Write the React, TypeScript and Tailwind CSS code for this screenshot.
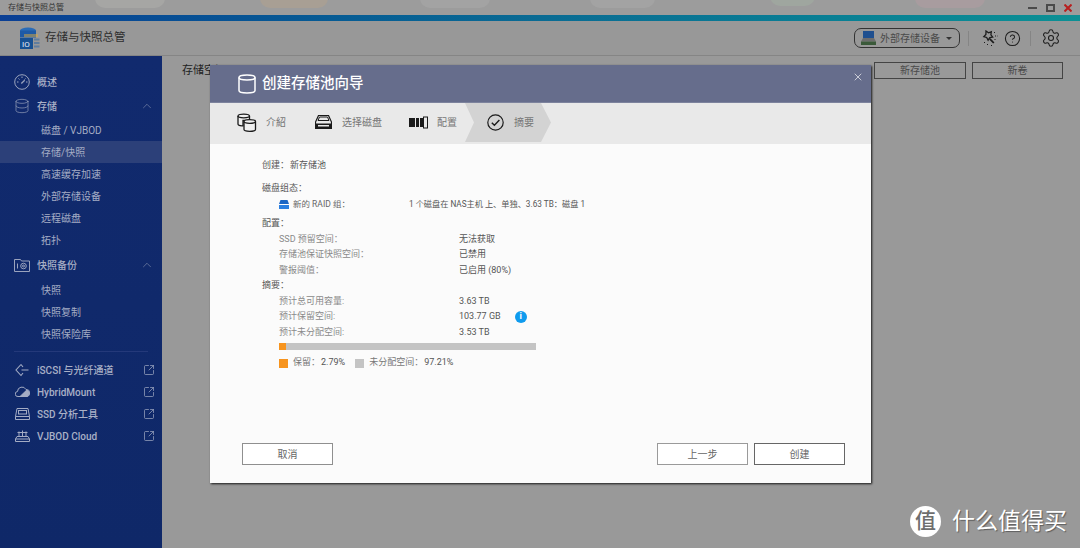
import { ChevronUp, CircleHelp, Database, Settings, SquareArrowOutUpRight, X } from 'lucide-react';

const font = "font-['Roboto','Noto_Sans_CJK_SC',sans-serif]";

const subStorage = ['磁盘 / VJBOD', '存储/快照', '高速缓存加速', '外部存储设备', '远程磁盘', '拓扑'];
const subBackup = ['快照', '快照复制', '快照保险库'];

function SubItem({ label, active }: { label: string; active?: boolean }) {
  return (
    <div className={`h-[22px] flex items-center pl-[41px] text-[10px] text-[#a4acc4] ${active ? 'bg-[#2c4079]' : ''}`}>{label}</div>
  );
}

function GaugeIcon() {
  return (
    <svg width="16" height="16" viewBox="0 0 16 16" fill="none" stroke="#9aa3bd" strokeWidth="1">
      <circle cx="8" cy="8" r="7.300" />
      <path d="M8 2.500v1.500M3 8h1.500M12 8h1.500M4.500 4.500l1 1M11.500 4.500l-1 1" />
      <path d="m7.300 9.500 3.400-3.200" strokeWidth="1.300" />
    </svg>
  );
}

function BackupIcon() {
  return (
    <svg width="16" height="14" viewBox="0 0 16 14" fill="none" stroke="#9aa3bd" strokeWidth="1">
      <path d="M.5 13.500V1.500h6l1 1.500h8v10.500z" />
      <circle cx="9.500" cy="8" r="2.800" />
      <circle cx="9.500" cy="8" r="1" />
      <path d="M3.500 5.500v5" />
    </svg>
  );
}

function IscsiIcon() {
  return (
    <svg width="14" height="14" viewBox="0 0 14 14" fill="none" stroke="#a4acc4" strokeWidth="1.100">
      <path d="M6 1.500 1 7l5 5.500 2-2.500M6 1.500 8 4M6.500 7h7" />
    </svg>
  );
}

function HybridIcon() {
  return (
    <svg width="15" height="12" viewBox="0 0 15 12" fill="none" stroke="#a4acc4" strokeWidth="1">
      <path d="M3 10.500a2.500 2.500 0 0 1-.5-5A4.500 4.500 0 0 1 11 3.500a3.500 3.500 0 0 1 .5 7z" />
      <path d="M5 10.500 12 3.800l2.500 3-2 3.700z" fill="#a4acc4" />
    </svg>
  );
}

function SsdIcon() {
  return (
    <svg width="15" height="12" viewBox="0 0 15 12" fill="none" stroke="#a4acc4" strokeWidth="1">
      <path d="M2 .5h11l1.500 8v3H.5v-3zM.5 8.500h14" />
      <rect x="3.500" y="2.500" width="8" height="3.500" />
    </svg>
  );
}

function CloudDiskIcon() {
  return (
    <svg width="15" height="12" viewBox="0 0 15 12" fill="none" stroke="#a4acc4" strokeWidth="1">
      <path d="M2 6.500.5 9v2.500h14V9L13 6.500zM.5 9h14" />
      <path d="M4 6.500V1.500M7.500 6.500V.5M11 6.500V1.500M2.500 2.500h10" />
    </svg>
  );
}

function LinkRow({ icon, label }: { icon: React.ReactNode; label: string }) {
  return (
    <div className="h-[22px] flex items-center pl-[15px] pr-[7px] text-[10px] font-medium text-[#a9b0c6]">
      <span className="w-[22px] flex items-center">{icon}</span>
      <span className="flex-1">{label}</span>
      <SquareArrowOutUpRight size={12} strokeWidth={1.400} className="text-[#a4acc4]" />
    </div>
  );
}

function Sidebar() {
  return (
    <aside className="w-[162px] shrink-0 bg-gradient-to-b from-[#112a6e] to-[#0f2868] pt-[14px]">
      <div className="h-[24px] flex items-center pl-[14px] text-[10px] font-medium text-[#a9b0c6]">
        <span className="mr-[7px] flex"><GaugeIcon /></span>
        概述
      </div>
      <div className="h-[24px] flex items-center pl-[14px] pr-[8px] text-[10px] font-medium text-[#a9b0c6]">
        <Database size={16} strokeWidth={1} className="mr-[7px] text-[#9aa3bd]" />
        <span className="flex-1">存储</span>
        <ChevronUp size={14} strokeWidth={1} className="text-[#8d97b4]" />
      </div>
      <div className="pt-[1px]">
        {subStorage.map((s) => (
          <SubItem key={s} label={s} active={s === '存储/快照'} />
        ))}
      </div>
      <div className="h-[28px] flex items-center pl-[14px] pr-[8px] text-[10px] font-medium text-[#a9b0c6]">
        <span className="mr-[7px] flex"><BackupIcon /></span>
        <span className="flex-1">快照备份</span>
        <ChevronUp size={14} strokeWidth={1} className="text-[#8d97b4]" />
      </div>
      {subBackup.map((s) => (
        <SubItem key={s} label={s} />
      ))}
      <div className="mx-[14px] mt-[6px] mb-[7px] border-t border-[#24397a]" />
      <LinkRow icon={<IscsiIcon />} label="iSCSI 与光纤通道" />
      <LinkRow icon={<HybridIcon />} label="HybridMount" />
      <LinkRow icon={<SsdIcon />} label="SSD 分析工具" />
      <LinkRow icon={<CloudDiskIcon />} label="VJBOD Cloud" />
    </aside>
  );
}

function AppLogo() {
  return (
    <svg width="21" height="22" viewBox="0 0 21 22">
      <ellipse cx="9" cy="3.500" rx="8" ry="3" fill="#2a6cb8" />
      <path d="M1 3.500v7h16v-7z" fill="#1d5aa6" />
      <path d="M5 7h14v3H5z" fill="#e0a93a" opacity="0.5" />
      <rect x="1" y="11" width="13" height="11" fill="#175092" />
      <text x="3" y="20" fontSize="8" fill="#e8eef6" fontFamily="Roboto">IO</text>
      <path d="M15 12.500h5.500M15 16h5.500M15 19.500h5.500" stroke="#5f7d9e" strokeWidth="2" />
    </svg>
  );
}

function WandIcon() {
  return (
    <svg width="17" height="17" viewBox="0 0 17 17" fill="none" stroke="#1d1d1d" strokeWidth="1.300">
      <path d="m5 1 2.500 1.800 2.800-1-.4 3 1.800 2.300-2.900.6-1.700 2.500-1.400-2.700L2.800 6.600 4.900 4.400z" />
      <path d="m8.800 8.800 4 4.200" strokeWidth="1.800" />
      <path d="M13 2.500h2M14 6h2.500M13.500 9.500h2M3 12.500h1.500M6 14.500h1.500M10 15.500h1.500" strokeWidth="1" strokeDasharray="1 1" />
    </svg>
  );
}

function Header() {
  return (
    <header className="h-[35px] shrink-0 bg-[#989898] border-b border-[#858585] flex items-center pl-[19px] pr-[19px]">
      <AppLogo />
      <span className="ml-[5px] text-[11.500px] text-[#2e2e2e]">存储与快照总管</span>
      <div className="ml-auto flex items-center">
        <div className="w-[106px] h-[20px] rounded-[7px] border border-[#333] flex items-center pl-[6px] text-[10px] text-[#4a4a4a]">
          <svg width="15" height="14" viewBox="0 0 15 14" className="mr-[4px]">
            <rect x="2" y="0" width="11" height="7" fill="#1f4f8f" />
            <path d="M2 7h11l2 3.500H0z" fill="#6d6d6d" />
            <rect x="0" y="10.500" width="15" height="3.500" fill="#3b5a3a" />
          </svg>
          外部存储设备
          <span className="ml-[6px] w-0 h-0 border-x-[3px] border-x-transparent border-t-[3.500px] border-t-[#333]" />
        </div>
        <span className="ml-[8px] w-px h-[15px] bg-[#858585]" />
        <span className="ml-[12px] flex"><WandIcon /></span>
        <CircleHelp size={17} strokeWidth={1.500} className="ml-[6px] text-[#1d1d1d]" />
        <span className="ml-[9px] w-px h-[15px] bg-[#858585]" />
        <Settings size={20} strokeWidth={1.300} className="ml-[10px] text-[#1d1d1d]" />
      </div>
    </header>
  );
}

function PoolsIcon() {
  return (
    <svg width="20" height="19" viewBox="0 0 20 19" fill="none" stroke="#1a1a1a" strokeWidth="1.300">
      <path d="M1 3v8c0 1 1.500 1.800 4 1.800h1V7.500h6.500V3c0-2.600-11.500-2.600-11.500 0z" fill="#f0f0f0" />
      <path d="M1 3c0 2.400 11.500 2.400 11.500 0" />
      <path d="M7 8.500v8c0 2.400 11.500 2.400 11.500 0v-8c0-2.600-11.500-2.600-11.500 0z" fill="#f0f0f0" />
      <path d="M7 8.500c0 2.400 11.500 2.400 11.500 0" />
    </svg>
  );
}

function TrayIcon() {
  return (
    <svg width="17" height="14" viewBox="0 0 17 14">
      <path d="M3.500.5h10l3 6.500v6.500H.5V7z" fill="none" stroke="#1a1a1a" strokeWidth="1.200" />
      <path d="M4.500 2h8l1.500 3.500H3z" fill="none" stroke="#1a1a1a" />
      <rect x="1" y="8.500" width="15" height="5" fill="#1a1a1a" />
      <rect x="3" y="10" width="11" height="1.500" fill="#e8e8e8" />
    </svg>
  );
}

function ConfigIcon() {
  return (
    <svg width="19" height="13" viewBox="0 0 19 13">
      <rect x="0" y="2" width="6" height="9" fill="#1a1a1a" />
      <rect x="7" y="2" width="3" height="9" fill="#1a1a1a" />
      <rect x="11" y="2" width="3" height="9" fill="#1a1a1a" />
      <rect x="14.500" y="1" width="4" height="11" fill="none" stroke="#1a1a1a" />
    </svg>
  );
}

function CheckIcon() {
  return (
    <svg width="17" height="17" viewBox="0 0 17 17" fill="none" stroke="#1a1a1a" strokeWidth="1.200">
      <circle cx="8.500" cy="8.500" r="7.700" />
      <path d="m4.800 8.700 2.600 2.600 5-5.200" strokeWidth="1.400" />
    </svg>
  );
}

function Row({ label, value, info }: { label: string; value: string; info?: boolean }) {
  return (
    <div className="h-[15.500px] flex items-center pl-[17px]">
      <span className="w-[180px] text-[#8a8a8a]">{label}</span>
      <span className="text-[#555]">{value}</span>
      {info && (
        <span className="ml-[14px] w-[12px] h-[12px] rounded-full bg-[#0f9bee] text-white text-[9px] font-bold leading-none flex items-center justify-center">i</span>
      )}
    </div>
  );
}

function Wizard() {
  return (
    <div className="absolute left-[210px] top-[65px] w-[661px] h-[418px] bg-[#fbfbfb] shadow-[1px_1px_2px_rgba(0,0,0,0.85)] flex flex-col">
      <div className="h-[38px] shrink-0 bg-[#666d8c] border-b border-[#7d839d] flex items-center pl-[28px] relative">
        <svg width="18" height="20" viewBox="0 0 18 20" fill="none" stroke="#fff" strokeWidth="1.500">
          <path d="M1 3.500v13c0 3.300 16 3.300 16 0v-13c0-3.300-16-3.300-16 0z" />
          <path d="M1 3.500c0 3.300 16 3.300 16 0" />
        </svg>
        <span className="ml-[6px] text-[14.500px] font-medium text-white">创建存储池向导</span>
        <X size={12} strokeWidth={1.300} className="absolute right-[7px] top-[6px] text-white" />
      </div>
      <div className="h-[41px] shrink-0 bg-[#e9e9e9] flex items-center pb-[3px] text-[10px] text-[#777] relative">
        <div className="absolute left-[255px] top-0 w-[86px] h-[39px] bg-[#d3d3d3] [clip-path:polygon(0_0,76px_0,100%_50%,76px_100%,0_100%,9px_50%)]" />
        <span className="ml-[27px] flex relative"><PoolsIcon /></span>
        <span className="ml-[9px] relative">介紹</span>
        <span className="ml-[29px] flex relative"><TrayIcon /></span>
        <span className="ml-[10px] relative">选择磁盘</span>
        <span className="ml-[27px] flex relative"><ConfigIcon /></span>
        <span className="ml-[9px] relative">配置</span>
        <span className="ml-[30px] flex relative"><CheckIcon /></span>
        <span className="ml-[10px] relative">摘要</span>
      </div>
      <div className="flex-1 pl-[52px] pt-[14px] text-[9px] text-[#555]">
        <div className="h-[15px] flex items-center">
          创建：
          <span className="ml-[1px]">新存储池</span>
        </div>
        <div className="mt-[8px] h-[15.500px] flex items-center">磁盘组态：</div>
        <div className="h-[15.500px] flex items-center pl-[17px]">
          <svg width="10" height="9" viewBox="0 0 10 9" className="mr-[4px]">
            <path d="M1.500 0h7L10 4H0z" fill="#1b66c4" />
            <rect x="0" y="5" width="10" height="4" fill="#2b7fe0" />
          </svg>
          <span className="w-[116px] text-[8.500px] text-[#666]">新的 RAID 组：</span>
          <span className="text-[8.200px]">1 个磁盘在 NAS主机 上、单独、3.63 TB：磁盘 1</span>
        </div>
        <div className="mt-[4px] h-[15.500px] flex items-center">配置：</div>
        <Row label="SSD 预留空间：" value="无法获取" />
        <Row label="存储池保证快照空间：" value="已禁用" />
        <Row label="警报阈值：" value="已启用 (80%)" />
        <div className="h-[15.500px] flex items-center">摘要：</div>
        <Row label="预计总可用容量:" value="3.63 TB" />
        <Row label="预计保留空间:" value="103.77 GB" info />
        <Row label="预计未分配空间:" value="3.53 TB" />
        <div className="ml-[17px] mt-[3px] w-[257px] h-[7px] bg-[#c4c4c4]">
          <div className="h-full bg-[#f7941e]" style={{ width: '2.79%' }} />
        </div>
        <div className="ml-[17px] mt-[8px] flex items-center h-[10px]">
          <span className="w-[9px] h-[9px] bg-[#f7941e] mr-[5px]" />
          <span className="text-[#777]">保留：</span>
          <span className="ml-[1px]">2.79%</span>
          <span className="ml-[10px] w-[9px] h-[9px] bg-[#c4c4c4] mr-[5px]" />
          <span className="text-[#777]">未分配空间：</span>
          <span className="ml-[1px]">97.21%</span>
        </div>
      </div>
      <div className="h-[22px] mb-[18px] shrink-0 pl-[32px] pr-[26px] flex text-[10px] text-[#666]">
        <button className="w-[91px] border border-[#8f8f8f] bg-white">取消</button>
        <button className="ml-auto w-[91px] border border-[#9a9a9a] bg-white">上一步</button>
        <button className="ml-[6px] w-[91px] border border-[#666] bg-white">创建</button>
      </div>
    </div>
  );
}

export default function App() {
  return (
    <div className={`relative w-[1080px] h-[548px] overflow-hidden flex flex-col bg-[#999] ${font}`}>
      <div className="h-[15px] shrink-0 bg-[#9c9c9c] flex items-center pl-[8px] text-[8px] text-[#333] relative overflow-hidden">
        <span className="absolute left-[95px] -top-[16px] w-[70px] h-[24px] rounded-[10px] bg-[#a6a6a4]" />
        <span className="absolute left-[260px] -top-[16px] w-[68px] h-[24px] rounded-[10px] bg-[#a89f94]" />
        <span className="absolute left-[420px] -top-[16px] w-[70px] h-[24px] rounded-[10px] bg-[#a3a3a3]" />
        <span className="absolute left-[590px] -top-[16px] w-[65px] h-[24px] rounded-[10px] bg-[#a3a3a3]" />
        <span className="absolute left-[770px] -top-[18px] w-[45px] h-[24px] rounded-[10px] bg-[#9fa69f]" />
        <span className="absolute left-[915px] -top-[16px] w-[70px] h-[24px] rounded-[10px] bg-[#a89c9f]" />
        <span className="relative">存储与快照总管</span>
        <div className="relative ml-auto flex items-center pr-[8px]">
          <span className="w-[9px] h-[2px] bg-[#4a4a4a]" />
          <span className="ml-[9px] w-[9px] h-[8px] border-2 border-[#4a4a4a]" />
          <svg width="8" height="8" viewBox="0 0 8 8" className="ml-[9px]" stroke="#b81f1f" strokeWidth="2">
            <path d="m.5.5 7 7M7.500.5l-7 7" />
          </svg>
        </div>
      </div>
      <div className="h-[6px] shrink-0 bg-gradient-to-r from-[#0b3f94] via-[#0a6b93] to-[#0c9094]" />
      <Header />
      <div className="flex-1 flex min-h-0">
        <Sidebar />
        <main className="flex-1 flex items-start pl-[20px] pr-[17px] pt-[6px] text-[10px] text-[#4a4a4a]">
          <span className="mt-[1px] text-[11px] text-[#222]">存储空间</span>
          <button className="ml-auto w-[92px] h-[17px] border border-[#444]">新存储池</button>
          <button className="ml-[6px] w-[91px] h-[17px] border border-[#444]">新卷</button>
        </main>
      </div>
      <Wizard />
      <div className="absolute left-[910px] top-[506px] flex items-center [text-shadow:1px_1px_1px_rgba(0,0,0,0.4)]">
        <span className="w-[31px] h-[31px] rounded-full bg-white text-[#6e6e6e] text-[21px] font-medium flex items-center justify-center [text-shadow:none]">值</span>
        <span className="ml-[11px] text-[23px] leading-none text-white">什么值得买</span>
      </div>
    </div>
  );
}
